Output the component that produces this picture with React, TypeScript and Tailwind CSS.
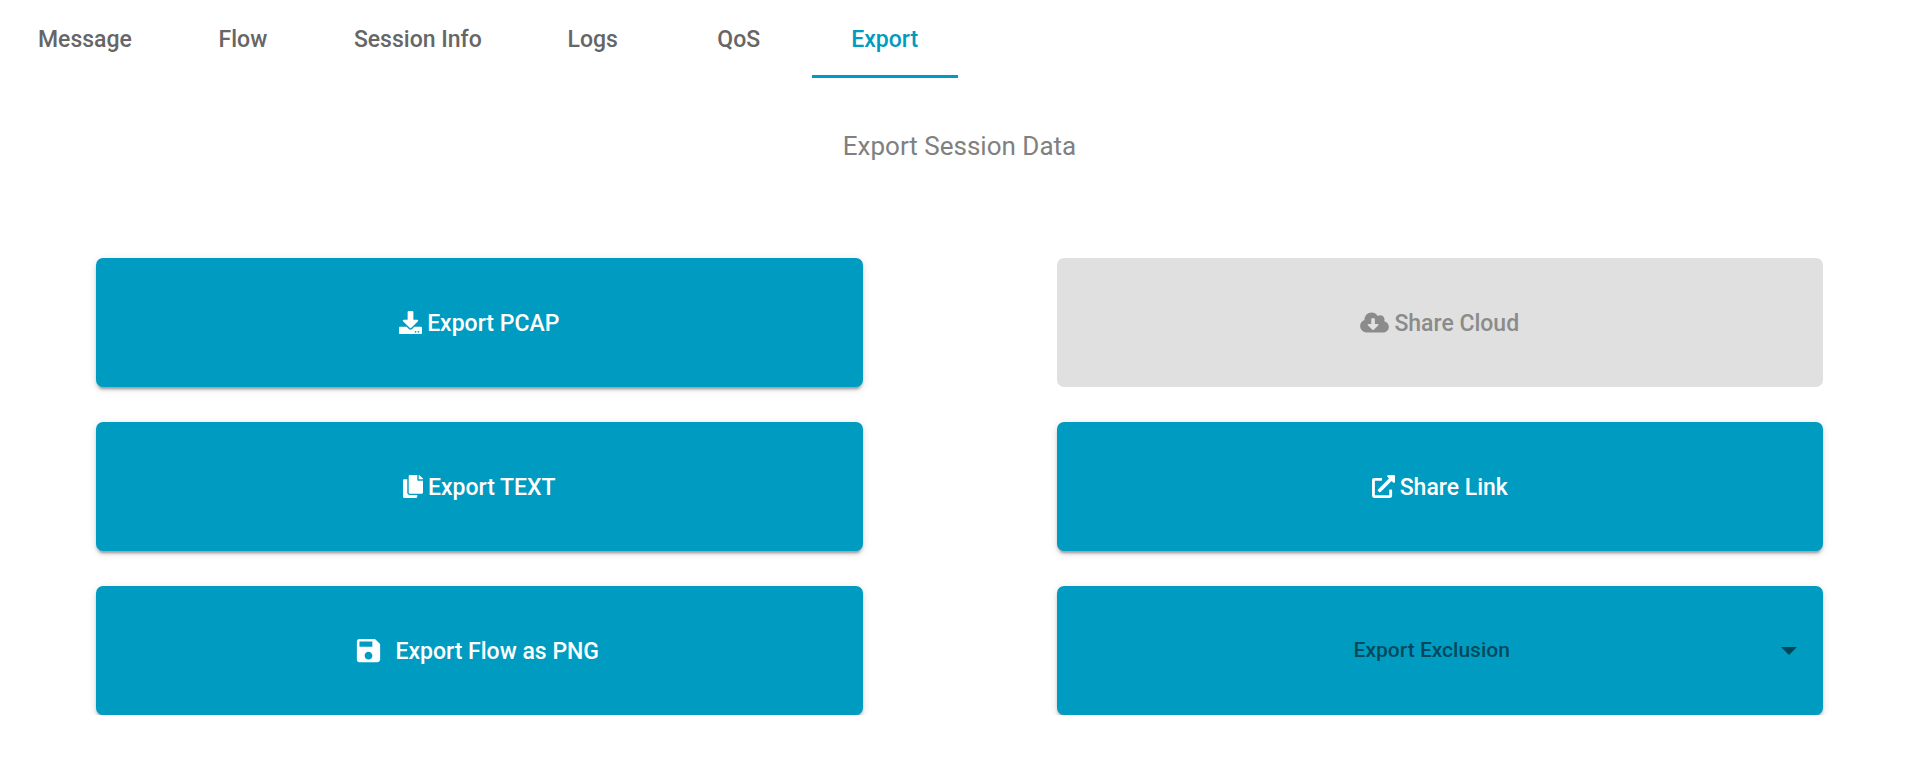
import React, { useState } from 'react'
import { FaCloudDownloadAlt, FaCopy, FaDownload, FaExternalLinkAlt } from 'react-icons/fa'
import { MdSave } from 'react-icons/md'

const tabs = ['Message', 'Flow', 'Session Info', 'Logs', 'QoS', 'Export']

const cardClass =
  'h-[129px] w-full rounded-[7px] bg-[#009bc0] shadow-[0_5px_2px_-3px_rgba(0,0,0,0.2),0_3px_3px_0_rgba(0,0,0,0.14),0_2px_8px_0_rgba(0,0,0,0.12)]'

const buttonClass = `${cardClass} flex items-center justify-center gap-[5px] text-[23px] leading-9 font-medium text-white`

const App = () => {
  const [activeTab, setActiveTab] = useState('Export')
  const [exclusion, setExclusion] = useState('')

  return (
    <div className="font-['Roboto',sans-serif]">
      <nav className="flex h-[78px]">
        {tabs.map((tab) => (
          <button
            key={tab}
            type="button"
            onClick={() => setActiveTab(tab)}
            className={`min-w-[146px] border-b-3 px-[38px] pt-[5px] text-[23px] leading-9 font-medium ${
              activeTab === tab ? 'border-[#009bc0] text-[#009bc0]' : 'border-transparent text-[#666666]'
            }`}
          >
            {tab}
          </button>
        ))}
      </nav>

      <h1 className="pt-[49px] text-center text-[26px] leading-[39px] text-[#808080]">
        Export Session Data
      </h1>

      <div className="grid grid-cols-2 gap-x-[194px] gap-y-[35px] px-24 pt-[92px]">
        <button type="button" className={buttonClass}>
          <FaDownload />
          <span className="pt-0.5">Export PCAP</span>
        </button>
        <button
          type="button"
          disabled
          className="flex h-[129px] w-full items-center justify-center gap-[5px] rounded-[7px] bg-[#e0e0e0] text-[23px] leading-9 font-medium text-[#8b8b8b]"
        >
          <FaCloudDownloadAlt className="h-[23px] w-[29px]" />
          <span className="pt-0.5">Share Cloud</span>
        </button>
        <button type="button" className={buttonClass}>
          <FaCopy className="h-[23px] w-5" />
          <span className="pt-0.5">Export TEXT</span>
        </button>
        <button type="button" className={buttonClass}>
          <FaExternalLinkAlt />
          <span className="pt-0.5">Share Link</span>
        </button>
        <button type="button" className={buttonClass}>
          <MdSave className="size-[31px]" />
          <span className="px-[6px] pt-0.5">Export Flow as PNG</span>
        </button>

        {/* Exclusion drop-down */}
        <div className={`${cardClass} relative`}>
          <select
            aria-label="Export Exclusion"
            value={exclusion}
            onChange={(e) => setExclusion(e.target.value)}
            className="h-full w-full cursor-pointer appearance-none rounded-[7px] pr-4 text-[21px] font-medium text-black/55 [text-align-last:center]"
          >
            <option value="">Export Exclusion</option>
          </select>
          <svg
            viewBox="0 0 16 8"
            className="pointer-events-none absolute top-1/2 right-[26px] h-2 w-4 -translate-y-1/2 fill-black/55"
          >
            <path d="M0 0h16L8 8z" />
          </svg>
        </div>
      </div>
    </div>
  )
}

export default App
